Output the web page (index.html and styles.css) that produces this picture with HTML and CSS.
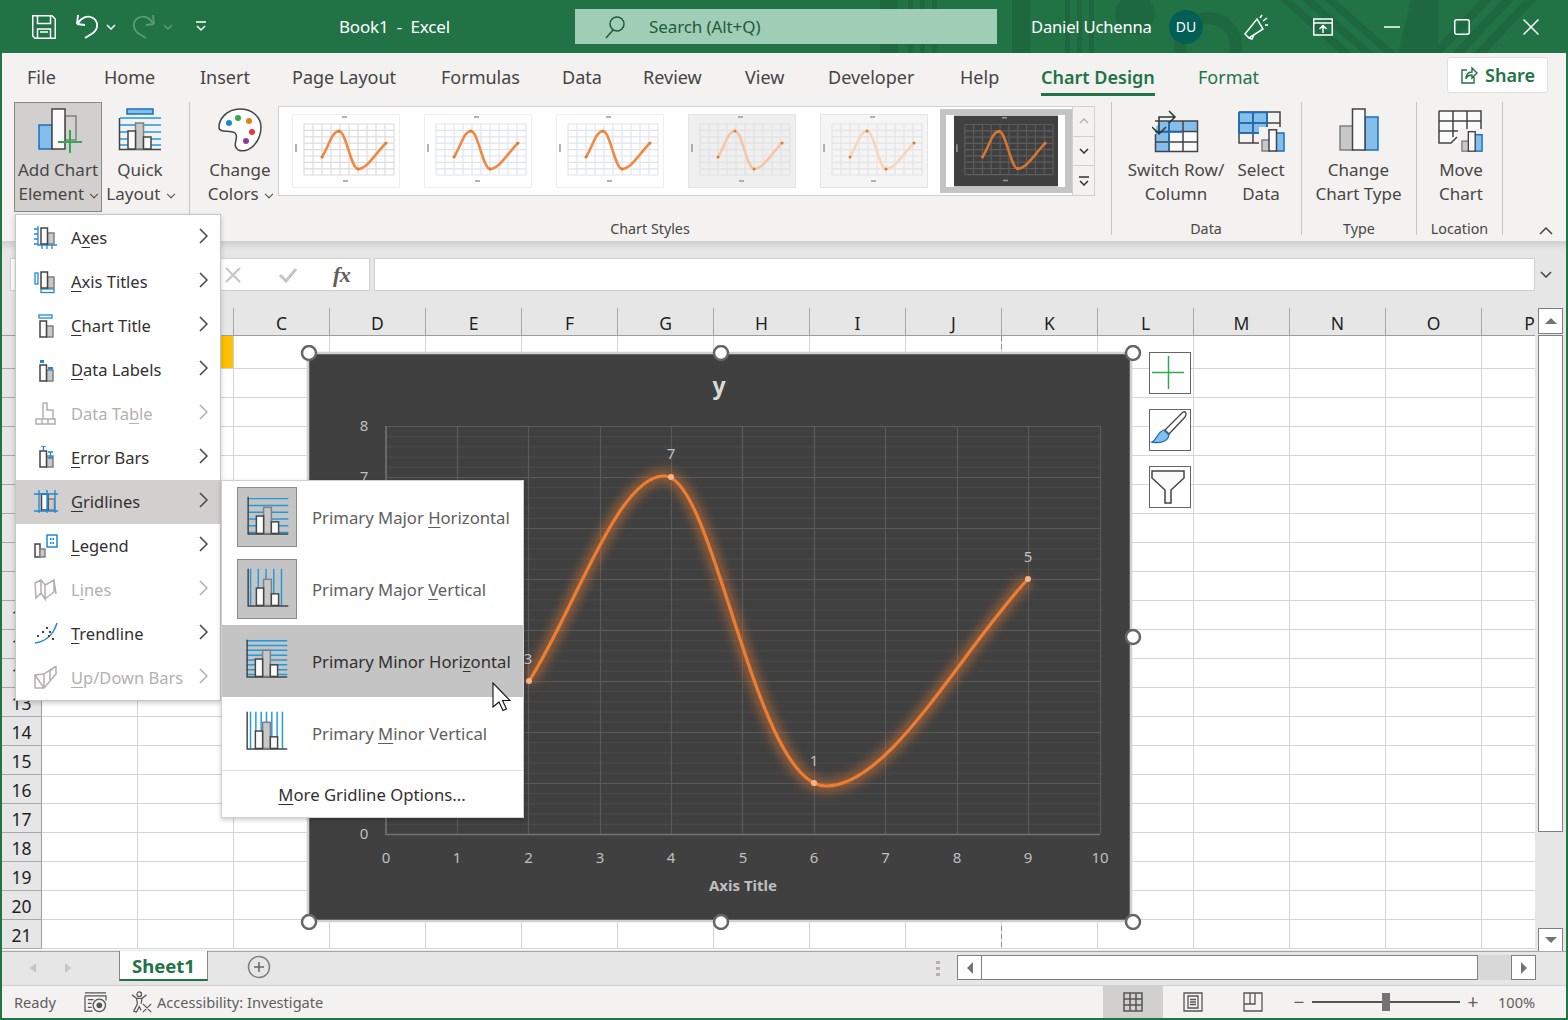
FILE: index.html
```html
<!DOCTYPE html>
<html lang="en">
<head>
<meta charset="utf-8">
<title>Book1 - Excel</title>
<link rel="stylesheet" href="styles.css">
</head>
<body>
<svg class="defs" width="0" height="0" aria-hidden="true">
  <defs>
    <symbol id="th" viewBox="0 0 106 72">
      <rect width="106" height="72" class="th-bg"/>
      <path class="th-grid" d="M11 9H101M11 15.4H101M11 21.8H101M11 28.2H101M11 34.6H101M11 41H101M11 47.4H101M11 53.8H101M11 60H101M11 9V60M20 9V60M29 9V60M38 9V60M47 9V60M56 9V60M65 9V60M74 9V60M83 9V60M92 9V60M101 9V60"/>
      <path class="th-line" d="M29 42C36 31 39 16 46 16C53 16 58 54 65 54C74 54 83 38 93 28"/>
      <path class="th-dot" d="M29 42v.1M46 16v.1M65 54v.1M93 28v.1"/>
      <path class="th-label" d="M3 29V37M49 2H54M50 66H55"/>
    </symbol>
    <symbol id="mb" viewBox="0 0 24 24">
      <rect x="12.5" y="7" width="6.5" height="11" fill="#c8c8c8" stroke="#808080" stroke-width="1.5"/>
      <rect x="6" y="2" width="6.5" height="16" fill="#fafafa" stroke="#444" stroke-width="1.5"/>
    </symbol>
    <symbol id="sb" viewBox="0 0 60 60">
      <path d="M10.500 9V47.500H52" fill="none" stroke="#444" stroke-width="1.500"/>
      <rect x="26.500" y="20" width="8" height="27" fill="#c8c8c8" stroke="#808080" stroke-width="1.500"/>
      <rect x="19" y="29" width="7.500" height="18" fill="#fafafa" stroke="#444" stroke-width="1.500"/>
      <rect x="34.500" y="35" width="7.500" height="12" fill="#fafafa" stroke="#444" stroke-width="1.500"/>
    </symbol>
    <symbol id="minibars" viewBox="0 0 24 24">
      <rect x="1" y="11" width="8" height="11" fill="#c8c8c8" stroke="#808080" stroke-width="1.500"/>
      <rect x="15" y="4" width="8" height="18" fill="#83beec" stroke="#1a6fbd" stroke-width="1.500"/>
      <rect x="8" y="0.750" width="7.500" height="21.250" fill="#fafafa" stroke="#444" stroke-width="1.500"/>
    </symbol>
  </defs>
</svg>

<div class="app">
  <header class="titlebar">
    <svg class="title-art" viewBox="0 0 1568 53" aria-hidden="true">
      <path d="M880 0h18v53h-18zM1012 0h18v53h-18zM908 0h5v53h-5zM920 0h5v53h-5zM932 0h5v53h-5zM1065 0h5v53h-5zM1077 0h5v53h-5zM1089 0h5v53h-5z"/>
      <circle cx="1135" cy="14" r="20"/>
      <circle cx="1208" cy="46" r="28" fill="none" stroke="#000" stroke-width="12"/>
      <path d="M1280 0h12l60 53h-12zM1302 0h12l60 53h-12zM1324 0h12l60 53h-12zM1411 0h27v53h-40zM1480 0h12l-50 53h-12zM1502 0h12l-50 53h-12zM1524 0h12l-50 53h-12z"/>
    </svg>
    <svg class="qa qa-save" viewBox="0 0 24 24"><path d="M.75.75H20L23.250 4V23.250H3L.75 21ZM5.500.75V8.500H18.500V.75M5.500 23V14H18.500V23M8 17H16" fill="none" stroke="#fff" stroke-width="1.500"/></svg>
    <svg class="qa qa-undo" viewBox="0 0 24 24"><path d="M1 10L9 11M1 10L2 1M2 9C6 3 12 1 17 4C23 8 22 15 17 19L9 24" transform="translate(0 -1)" fill="none" stroke="#fff" stroke-width="1.800"/></svg>
    <svg class="qa-chev" viewBox="0 0 10 6"><path d="M1 1L5 5L9 1" fill="none" stroke="#fff" stroke-width="1.500"/></svg>
    <svg class="qa qa-redo" viewBox="0 0 24 24"><path d="M23 10L15 11M23 10L22 1M22 9C18 3 12 1 7 4C1 8 2 15 7 19L15 24" transform="translate(0 -1)" fill="none" stroke="#5a9a78" stroke-width="1.800"/></svg>
    <svg class="qa-chev qa-chev2" viewBox="0 0 10 6"><path d="M1 1L5 5L9 1" fill="none" stroke="#5a9a78" stroke-width="1.500"/></svg>
    <svg class="qa-custom" viewBox="0 0 12 11"><path d="M1 1H11M2 5L6 9L10 5" fill="none" stroke="#fff" stroke-width="1.500"/></svg>
    <div class="doc-title">Book1&nbsp; - &nbsp;Excel</div>
    <div class="search">
      <svg class="search-icon" viewBox="0 0 22 24"><circle cx="13" cy="9" r="7" fill="none" stroke="#1d5c3a" stroke-width="1.500"/><path d="M9 15L2 23" stroke="#1d5c3a" stroke-width="1.500"/></svg>
      <span>Search (Alt+Q)</span>
    </div>
    <div class="user">Daniel Uchenna</div>
    <div class="avatar">DU</div>
    <svg class="win win-coauth" viewBox="0 0 26 26"><path d="M2 20L14 5L20 15L6 24ZM6 24L9 25L11 21M17 4L19 1M20 7L24 4M22 11L25 11" fill="none" stroke="#fff" stroke-width="1.500"/></svg>
    <svg class="win win-display" viewBox="0 0 20 18"><path d="M.750 1H19.250V17H.750ZM.750 5H19.250M10 15V8M6.500 11L10 7.500L13.500 11" fill="none" stroke="#fff" stroke-width="1.500"/></svg>
    <svg class="win win-min" viewBox="0 0 16 2"><path d="M0 1H16" stroke="#fff" stroke-width="1.500"/></svg>
    <svg class="win win-max" viewBox="0 0 16 16"><rect x=".75" y=".75" width="14.500" height="14.500" rx="2" fill="none" stroke="#fff" stroke-width="1.500"/></svg>
    <svg class="win win-close" viewBox="0 0 16 16"><path d="M.500 .500L15.500 15.500M15.500 .500L.500 15.500" stroke="#fff" stroke-width="1.500"/></svg>
  </header>

  <nav class="tabs">
    <span class="tab">File</span>
    <span class="tab">Home</span>
    <span class="tab">Insert</span>
    <span class="tab">Page Layout</span>
    <span class="tab">Formulas</span>
    <span class="tab">Data</span>
    <span class="tab">Review</span>
    <span class="tab">View</span>
    <span class="tab">Developer</span>
    <span class="tab">Help</span>
    <span class="tab tab-active">Chart Design</span>
    <span class="tab tab-green">Format</span>
    <button class="share">
      <svg viewBox="0 0 18 18" class="share-icon"><path d="M7 4H2V17H14V11M6 13C6 8 9 6 12 6V2L17 7L12 12V9C9 9 7 10 6 13Z" fill="none" stroke="#217346" stroke-width="1.400"/></svg>
      Share
    </button>
  </nav>

  <section class="ribbon">
    <div class="group g-first">
      <div class="btns">
        <div class="big big-add is-open">
          <svg class="big-icon icon-add" viewBox="0 0 46 46" width="46" height="46"><rect x="1" y="18" width="13" height="24" fill="#83beec" stroke="#1a6fbd" stroke-width="1.500"/><path d="M27 9H38V33H27Z" fill="#d2d0ce" stroke="#808080" stroke-width="1.500"/><rect x="14" y="2" width="13" height="40" fill="#fafafa" stroke="#444" stroke-width="1.500"/><path d="M20 35H44M32 23V46" stroke="#33a852" stroke-width="2"/></svg>
          <span>Add Chart</span>
          <span>Element <i class="caret"></i></span>
        </div>
        <div class="big big-quick">
          <svg class="big-icon" viewBox="0 0 44 46" width="44" height="46"><path d="M2 11H43M2 18H43M2 25H43M2 32H43M2 38H43" stroke="#1e9ae0" stroke-width="1.500"/><rect x="9" y="2" width="26" height="5" fill="#83beec" stroke="#1a6fbd" stroke-width="1.500"/><path d="M1.500 11V42.500H43" fill="none" stroke="#444" stroke-width="1.500"/><rect x="17.500" y="16" width="8" height="26" fill="#c8c8c8" stroke="#808080" stroke-width="1.500"/><rect x="10" y="24" width="7.500" height="18" fill="#fafafa" stroke="#444" stroke-width="1.500"/><rect x="25.500" y="30" width="7.500" height="12" fill="#fafafa" stroke="#444" stroke-width="1.500"/></svg>
          <span>Quick</span>
          <span>Layout <i class="caret"></i></span>
        </div>
      </div>
    </div>
    <div class="group g-colors">
      <div class="big big-colors">
        <svg class="big-icon" viewBox="0 0 46 46" width="46" height="46"><path d="M23 2C9 2 2 13 2 20C2 27 13 22 18 26C23 30 14 38 21 43C33 47 44 34 44 20C44 10 35 2 23 2Z" fill="#fff" stroke="#444" stroke-width="1.500"/><circle cx="12" cy="16" r="3" fill="#1e88d8"/><circle cx="21" cy="11" r="3" fill="#33a852"/><circle cx="32" cy="14" r="3" fill="#ee7b10"/><circle cx="35" cy="25" r="3" fill="#e8383b"/><circle cx="29" cy="34" r="3" fill="#8e3aa8"/></svg>
        <span>Change</span>
        <span>Colors <i class="caret"></i></span>
      </div>
    </div>
    <div class="group g-styles">
      <div class="gallery-row">
        <div class="gallery">
          <svg class="thumb t1"><use href="#th"/></svg>
          <svg class="thumb t2"><use href="#th"/></svg>
          <svg class="thumb t3"><use href="#th"/></svg>
          <svg class="thumb t4"><use href="#th"/></svg>
          <svg class="thumb t5"><use href="#th"/></svg>
          <div class="thumb-sel"><div class="thumb-inner"><svg class="thumb thumb-dark t6"><use href="#th"/></svg></div></div>
        </div>
        <div class="gal-scroll">
          <div class="gal-btn"><svg viewBox="0 0 10 6"><path d="M1 5L5 1L9 5" fill="none" stroke="#b3b0ad" stroke-width="1.300"/></svg></div>
          <div class="gal-btn"><svg viewBox="0 0 10 6"><path d="M1 1L5 5L9 1" fill="none" stroke="#333" stroke-width="1.500"/></svg></div>
          <div class="gal-btn"><svg class="gal-more" viewBox="0 0 10 10"><path d="M0 1H10M1 5L5 9L9 5" fill="none" stroke="#333" stroke-width="1.500"/></svg></div>
        </div>
      </div>
      <div class="group-label label-styles">Chart Styles</div>
    </div>
    <div class="group g-data">
      <div class="btns">
        <div class="big big-switch">
          <svg class="big-icon" viewBox="0 0 48 46" width="48" height="46"><path d="M4 14H45V44H4Z" fill="#fafafa"/><path d="M4 14H45V24H17V44H4Z" fill="#83beec"/><path d="M4 12H10L4 20Z" fill="#f3f2f1"/><path d="M3 14H45.500V44.500H3.500V27M17 14V44M31 14V44M3 24.500H45M3 35H45" fill="none" stroke="#444" stroke-width="1.500"/><path d="M17 25H31M17 14V25M3.500 25H17M17 25V44" fill="none" stroke="#1a6fbd" stroke-width="1.500"/><path d="M7 27L7 10H22M17 4L23 10L17 16M0 20L7 27L14 20" fill="none" stroke="#333" stroke-width="1.500"/></svg>
          <span>Switch Row/</span>
          <span>Column</span>
        </div>
        <div class="big big-select">
          <svg class="big-icon" viewBox="0 0 50 46" width="50" height="46"><rect x="3" y="5" width="28" height="21" fill="#83beec"/><path d="M3 5H44V36M44 36H3V5M17 5V36M31 5V36M3 16H44M3 26H44" fill="none" stroke="#444" stroke-width="1.500"/><path d="M3 5.500H31V26H3ZM17 5V26M3 16H31" fill="none" stroke="#1a6fbd" stroke-width="1.500"/><rect x="23" y="20" width="27" height="26" fill="#f3f2f1"/><svg x="24" y="22" width="26" height="24"><use href="#minibars"/></svg></svg>
          <span>Select</span>
          <span>Data</span>
        </div>
      </div>
      <div class="group-label">Data</div>
    </div>
    <div class="group g-type">
      <div class="big big-type">
        <svg class="big-icon" viewBox="0 0 40 46" width="40" height="46"><rect x="1" y="19" width="13" height="24" fill="#c8c8c8" stroke="#808080" stroke-width="1.500"/><rect x="26" y="10" width="13" height="33" fill="#83beec" stroke="#1a6fbd" stroke-width="1.500"/><rect x="13.500" y="2" width="12.500" height="41" fill="#fafafa" stroke="#444" stroke-width="1.500"/></svg>
        <span>Change</span>
        <span>Chart Type</span>
      </div>
      <div class="group-label">Type</div>
    </div>
    <div class="group g-location">
      <div class="big big-move">
        <svg class="big-icon" viewBox="0 0 48 46" width="48" height="46"><path d="M2 4H44V36H2Z" fill="#fafafa"/><path d="M2 4H44V34M2 4V36H14L20 30M2 14H44M2 24H44M16 4V30M30 4V30" fill="none" stroke="#444" stroke-width="1.500"/><rect x="21" y="22" width="27" height="24" fill="#f3f2f1"/><svg x="23" y="24" width="24" height="22"><use href="#minibars"/></svg></svg>
        <span>Move</span>
        <span>Chart</span>
      </div>
      <div class="group-label">Location</div>
    </div>
    <svg class="collapse" viewBox="0 0 14 8"><path d="M1 7L7 1L13 7" fill="none" stroke="#444" stroke-width="1.500"/></svg>
  </section>

  <section class="formula">
    <div class="name-box"></div>
    <div class="fx-box">
      <svg class="fx-x" viewBox="0 0 18 18"><path d="M2 2L16 16M16 2L2 16" stroke="#c8c6c4" stroke-width="2.200"/></svg>
      <svg class="fx-v" viewBox="0 0 20 18"><path d="M2 9L8 15L18 3" fill="none" stroke="#c8c6c4" stroke-width="3"/></svg>
      <span class="fx-f">fx</span>
    </div>
    <div class="fx-input"></div>
    <svg class="fx-chev" viewBox="0 0 12 7"><path d="M1 1L6 6L11 1" fill="none" stroke="#444" stroke-width="1.500"/></svg>
  </section>

  <section class="sheet">
    <div class="sheet-main">
      <div class="col-heads">
        <div class="corner"></div>
        <div class="col"></div><div class="col">B</div><div class="col">C</div><div class="col">D</div><div class="col">E</div><div class="col">F</div><div class="col">G</div><div class="col">H</div><div class="col">I</div><div class="col">J</div><div class="col">K</div><div class="col">L</div><div class="col">M</div><div class="col">N</div><div class="col">O</div><div class="col">P</div>
      </div>
      <div class="rows">
        <div class="row row-first"><div class="rh">1</div><div class="cells"><div class="cell-gold"></div></div></div>
        <div class="row"><div class="rh">2</div><div class="cells"></div></div>
        <div class="row"><div class="rh">3</div><div class="cells"></div></div>
        <div class="row"><div class="rh">4</div><div class="cells"></div></div>
        <div class="row"><div class="rh">5</div><div class="cells"></div></div>
        <div class="row"><div class="rh">6</div><div class="cells"></div></div>
        <div class="row"><div class="rh">7</div><div class="cells"></div></div>
        <div class="row"><div class="rh">8</div><div class="cells"></div></div>
        <div class="row"><div class="rh">9</div><div class="cells"></div></div>
        <div class="row"><div class="rh">10</div><div class="cells"></div></div>
        <div class="row"><div class="rh">11</div><div class="cells"></div></div>
        <div class="row"><div class="rh">12</div><div class="cells"></div></div>
        <div class="row"><div class="rh">13</div><div class="cells"></div></div>
        <div class="row"><div class="rh">14</div><div class="cells"></div></div>
        <div class="row"><div class="rh">15</div><div class="cells"></div></div>
        <div class="row"><div class="rh">16</div><div class="cells"></div></div>
        <div class="row"><div class="rh">17</div><div class="cells"></div></div>
        <div class="row"><div class="rh">18</div><div class="cells"></div></div>
        <div class="row"><div class="rh">19</div><div class="cells"></div></div>
        <div class="row"><div class="rh">20</div><div class="cells"></div></div>
        <div class="row"><div class="rh">21</div><div class="cells"></div></div>
      </div>
    </div>
    <div class="vscroll">
      <div class="sb-btn"><i class="tri tri-up"></i></div>
      <div class="sb-thumb"></div>
      <div class="sb-track"></div>
      <div class="sb-btn sb-btn-down"><i class="tri tri-down"></i></div>
    </div>
  </section>

  <section class="sheetbar">
    <i class="nav-tri nav-l"></i>
    <i class="nav-tri nav-r"></i>
    <div class="sheet-tab">Sheet1</div>
    <svg class="add-sheet" viewBox="0 0 24 24"><circle cx="12" cy="12" r="10.500" fill="none" stroke="#808080" stroke-width="1.500"/><path d="M7 12H17M12 7V17" stroke="#666" stroke-width="1.500"/></svg>
    <div class="dots"><i></i><i></i><i></i></div>
    <div class="hscroll">
      <div class="hbtn"><i class="tri tri-left"></i></div>
      <div class="hthumb"></div>
      <div class="htrack"></div>
      <div class="hbtn"><i class="tri tri-right"></i></div>
    </div>
  </section>

  <footer class="status">
    <span class="st-ready">Ready</span>
    <svg class="st-macro" viewBox="0 0 24 22"><path d="M1 1H23M1 4H23V9M1 4V20H9M4 8H10M4 12H8M4 16H8" fill="none" stroke="#555" stroke-width="1.300"/><circle cx="16" cy="14" r="6.500" fill="none" stroke="#555" stroke-width="1.300"/><circle cx="16" cy="14" r="3" fill="#555"/></svg>
    <svg class="st-acc" viewBox="0 0 24 24"><circle cx="9" cy="3.500" r="2.500" fill="none" stroke="#555" stroke-width="1.300"/><path d="M1 4L6 8H12L17 4M6 8L7 14L3 22L6 23L9 17L11 21M12 8L11 14M13 14L22 23M22 14L13 23" fill="none" stroke="#555" stroke-width="1.300"/></svg>
    <span class="st-acc-text">Accessibility: Investigate</span>
    <div class="views">
      <div class="view view-on"><svg viewBox="0 0 20 20"><path d="M1 1H19V19H1ZM1 7H19M1 13H19M7 1V19M13 1V19" fill="none" stroke="#555" stroke-width="1.500"/></svg></div>
      <div class="view"><svg viewBox="0 0 20 20"><path d="M1 1H19V19H1ZM5 4H15V16H5ZM7 7.500H13M7 10H13M7 12.500H13" fill="none" stroke="#555" stroke-width="1.300"/></svg></div>
      <div class="view"><svg viewBox="0 0 20 20"><path d="M1 1H19V19H1ZM1 12H12V1M7 1V12" fill="none" stroke="#555" stroke-width="1.300"/></svg></div>
    </div>
    <div class="zoom-ctl">
      <span class="z-sym">−</span>
      <div class="z-track"><i class="z-knob"></i></div>
      <span class="z-sym">+</span>
      <span class="z-val">100%</span>
    </div>
  </footer>
</div>

<svg class="chart" viewBox="300 345 845 585" aria-label="Line chart">
  <defs>
    <pattern id="minor" patternUnits="userSpaceOnUse" x="386" y="426" width="200" height="10.200"><path d="M0 .5H200" stroke="#4b4b4b" stroke-width="1"/></pattern>
    <filter id="glow" x="-20%" y="-20%" width="140%" height="140%"><feGaussianBlur stdDeviation="5"/></filter>
  </defs>
  <rect x="308" y="353" width="823" height="568" fill="#404040" stroke="#d0d0d0" stroke-width="2.500"/>
  <rect x="386" y="426" width="714" height="408" fill="url(#minor)"/>
  <path d="M386 426.500H1100M386 477.500H1100M386 528.500H1100M386 579.500H1100M386 630.500H1100M386 681.500H1100M386 732.500H1100M386 783.500H1100M457.500 426V834M528.500 426V834M600.500 426V834M671.500 426V834M742.500 426V834M814.500 426V834M885.500 426V834M957.500 426V834M1028.500 426V834M1100.500 426V834" stroke="#5a5a5a" stroke-width="1.200" fill="none"/>
  <path d="M386 426V834.500H1100" stroke="#757575" stroke-width="1.500" fill="none"/>
  <path class="curve-glow" d="M529 681C575 610 618 474 665 476C715 478 755 786 826 786C890 786 960 652 1028 579"/>
  <path class="curve" d="M529 681C575 610 618 474 665 476C715 478 755 786 826 786C890 786 960 652 1028 579"/>
  <g class="pts"><circle cx="529" cy="681" r="3"/><circle cx="671" cy="477" r="3"/><circle cx="814" cy="783" r="3"/><circle cx="1028" cy="579" r="3"/></g>
  <text class="c-title" x="719" y="394">y</text>
  <g class="c-val">
    <text x="528" y="664">3</text><text x="671" y="459">7</text><text x="814" y="766">1</text><text x="1028" y="562">5</text>
  </g>
  <g class="c-y"><text x="364" y="431">8</text><text x="364" y="482">7</text><text x="364" y="839">0</text></g>
  <g class="c-x"><text x="386" y="863">0</text><text x="457" y="863">1</text><text x="528.500" y="863">2</text><text x="600" y="863">3</text><text x="671" y="863">4</text><text x="743" y="863">5</text><text x="814" y="863">6</text><text x="885.500" y="863">7</text><text x="957" y="863">8</text><text x="1028" y="863">9</text><text x="1100" y="863">10</text></g>
  <text class="c-axis" x="743" y="891">Axis Title</text>
  <g class="handles"><circle cx="309" cy="353" r="7"/><circle cx="721" cy="353" r="7"/><circle cx="1133" cy="353" r="7"/><circle cx="1133" cy="637" r="7"/><circle cx="309" cy="922" r="7"/><circle cx="721" cy="922" r="7"/><circle cx="1133" cy="922" r="7"/></g>
</svg>

<div class="page-break pb-top"></div>
<div class="page-break pb-bottom"></div>

<div class="floaters">
  <div class="fl"><svg viewBox="0 0 40 40"><path d="M2 19.500H34M18.500 3V36" stroke="#33a852" stroke-width="1.500"/></svg></div>
  <div class="fl"><svg viewBox="0 0 40 40"><path d="M33 2C36 1 37 4 35 7L19 24L15 20Z" fill="#fff" stroke="#444" stroke-width="1.300"/><path d="M14 20L19 25C18 31 11 34 2 32C7 30 7 22 14 20Z" fill="#83beec" stroke="#1a6fbd" stroke-width="1.300"/></svg></div>
  <div class="fl"><svg viewBox="0 0 40 40"><path d="M2 4H34V11L21 23V36H15V23L2 11Z" fill="#fafafa" stroke="#444" stroke-width="1.500"/></svg></div>
</div>

<div class="menu">
  <div class="mi"><svg class="mi-ic" viewBox="0 0 24 24"><path d="M4 0V19H23M0 3H4M0 8H4M0 13H4M0 18H4M8 19V23M13 19V23M18 19V23" fill="none" stroke="#1e88d8" stroke-width="1.300"/><use href="#mb" x="1"/></svg><span class="mi-t">A<u>x</u>es</span><svg class="chev" viewBox="0 0 9 16"><path d="M1 1L8 8L1 15" fill="none" stroke="#444" stroke-width="1.500"/></svg></div>
  <div class="mi"><svg class="mi-ic" viewBox="0 0 24 24"><rect x="1" y="3" width="3" height="11" fill="#fff" stroke="#1e88d8" stroke-width="1.300"/><rect x="7" y="19" width="13" height="3.500" fill="#fff" stroke="#1e88d8" stroke-width="1.300"/><use href="#mb" x="1"/></svg><span class="mi-t"><u>A</u>xis Titles</span><svg class="chev" viewBox="0 0 9 16"><path d="M1 1L8 8L1 15" fill="none" stroke="#444" stroke-width="1.500"/></svg></div>
  <div class="mi"><svg class="mi-ic" viewBox="0 0 24 24"><rect x="5" y="1" width="13" height="3" fill="#fff" stroke="#1e88d8" stroke-width="1.300"/><use href="#mb" y="5"/></svg><span class="mi-t"><u>C</u>hart Title</span><svg class="chev" viewBox="0 0 9 16"><path d="M1 1L8 8L1 15" fill="none" stroke="#444" stroke-width="1.500"/></svg></div>
  <div class="mi"><svg class="mi-ic" viewBox="0 0 24 24"><use href="#mb" y="5"/><rect x="6" y="2" width="4" height="3" fill="#1e88d8"/><rect x="14" y="9" width="5" height="2.500" fill="#1e88d8"/></svg><span class="mi-t"><u>D</u>ata Labels</span><svg class="chev" viewBox="0 0 9 16"><path d="M1 1L8 8L1 15" fill="none" stroke="#444" stroke-width="1.500"/></svg></div>
  <div class="mi mi-dis"><svg class="mi-ic" viewBox="0 0 24 24"><path d="M9 1H13V8H19V17M9 1V17M2 17H21V22H2ZM8 17V22M14 17V22" fill="none" stroke="#b3b0ad" stroke-width="1.500"/></svg><span class="mi-t">Data Ta<u>b</u>le</span><svg class="chev" viewBox="0 0 9 16"><path d="M1 1L8 8L1 15" fill="none" stroke="#b3b0ad" stroke-width="1.500"/></svg></div>
  <div class="mi"><svg class="mi-ic" viewBox="0 0 24 24"><use href="#mb" y="3"/><path d="M7 0H12M9.500 0V5M14 6H19M16.500 6V12M14 12H19" fill="none" stroke="#1e88d8" stroke-width="1.300"/></svg><span class="mi-t"><u>E</u>rror Bars</span><svg class="chev" viewBox="0 0 9 16"><path d="M1 1L8 8L1 15" fill="none" stroke="#444" stroke-width="1.500"/></svg></div>
  <div class="mi mi-on"><svg class="mi-ic" viewBox="0 0 24 24"><use href="#mb" x="1.500" y="2"/><path d="M0 4H24M0 21H24M5 0V23M13 0V23M21 0V23" fill="none" stroke="#1e88d8" stroke-width="1.300"/></svg><span class="mi-t"><u>G</u>ridlines</span><svg class="chev" viewBox="0 0 9 16"><path d="M1 1L8 8L1 15" fill="none" stroke="#444" stroke-width="1.500"/></svg></div>
  <div class="mi"><svg class="mi-ic" viewBox="0 0 24 24"><rect x="1" y="10" width="5" height="13" fill="#fafafa" stroke="#444" stroke-width="1.500"/><rect x="6" y="15" width="5" height="8" fill="#c8c8c8" stroke="#808080" stroke-width="1.500"/><rect x="13" y="1" width="10" height="12" fill="#fff" stroke="#1e88d8" stroke-width="1.500"/><path d="M16 5H20M16 9H20" stroke="#1e88d8" stroke-width="2" stroke-dasharray="1.500 1"/></svg><span class="mi-t"><u>L</u>egend</span><svg class="chev" viewBox="0 0 9 16"><path d="M1 1L8 8L1 15" fill="none" stroke="#444" stroke-width="1.500"/></svg></div>
  <div class="mi mi-dis"><svg class="mi-ic" viewBox="0 0 24 24"><path d="M1 5L7 2L11 7V21L7 15L2 20ZM11 7L20 2V14L11 21M7 2V15M20 2L22 16" fill="none" stroke="#b3b0ad" stroke-width="1.500"/></svg><span class="mi-t">L<u>i</u>nes</span><svg class="chev" viewBox="0 0 9 16"><path d="M1 1L8 8L1 15" fill="none" stroke="#b3b0ad" stroke-width="1.500"/></svg></div>
  <div class="mi"><svg class="mi-ic" viewBox="0 0 24 24"><path d="M1 21C10 20 19 14 23 1" fill="none" stroke="#1e88d8" stroke-width="1.500"/><path d="M4 13v2M9 9v2M13 5v2M15 13v2M19 16v2M16 9v2" stroke="#444" stroke-width="2"/></svg><span class="mi-t"><u>T</u>rendline</span><svg class="chev" viewBox="0 0 9 16"><path d="M1 1L8 8L1 15" fill="none" stroke="#444" stroke-width="1.500"/></svg></div>
  <div class="mi mi-dis"><svg class="mi-ic" viewBox="0 0 24 24"><path d="M1 9V22H10L22 8V0L10 8ZM1 9L10 22M22 0L16 5V14M10 8V22" fill="none" stroke="#b3b0ad" stroke-width="1.500"/></svg><span class="mi-t"><u>U</u>p/Down Bars</span><svg class="chev" viewBox="0 0 9 16"><path d="M1 1L8 8L1 15" fill="none" stroke="#b3b0ad" stroke-width="1.500"/></svg></div>
</div>

<div class="submenu">
  <div class="si"><div class="si-box si-boxed"><svg viewBox="0 0 60 60"><path d="M10 11H52M10 18H52M10 25H52M10 32H52M10 39H52M10 46H52" stroke="#1e9ae0" stroke-width="1.500"/><use href="#sb"/></svg></div><span>Primary Major <u>H</u>orizontal</span></div>
  <div class="si"><div class="si-box si-boxed"><svg viewBox="0 0 60 60"><path d="M13 9V47M21 9V47M29 9V47M37 9V47M45 9V47" stroke="#1e9ae0" stroke-width="1.500"/><use href="#sb"/></svg></div><span>Primary Major <u>V</u>ertical</span></div>
  <div class="si si-on"><div class="si-box"><svg viewBox="0 0 60 60"><path d="M10 10H52M10 15H52M10 20H52M10 25H52M10 30H52M10 35H52M10 40H52M10 45H52" stroke="#1e9ae0" stroke-width="1.500"/><use href="#sb"/></svg></div><span>Primary Minor Hori<u>z</u>ontal</span></div>
  <div class="si"><div class="si-box"><svg viewBox="0 0 60 60"><path d="M14 9V47M19.500 9V47M25 9V47M30.500 9V47M36 9V47M41.500 9V47M47 9V47" stroke="#1e9ae0" stroke-width="1.500"/><use href="#sb"/></svg></div><span>Primary <u>M</u>inor Vertical</span></div>
  <div class="si-sep"></div>
  <div class="si-more"><u>M</u>ore Gridline Options...</div>
</div>

<svg class="cursor" viewBox="0 0 20 30"><path d="M1 1V25L7 20L11 28.500L14.500 27L10.500 18.500H18Z" fill="#fff" stroke="#111" stroke-width="1.100"/></svg>
</body>
</html>
```

FILE: styles.css
```css
* { box-sizing: border-box; }
html, body { margin: 0; height: 1020px; overflow: hidden; }
body { position: relative; background: #fff; font-family: "Noto Sans", "Open Sans", sans-serif; color: #323130; }
.defs { position: absolute; }
.app { height: 1020px; display: flex; flex-direction: column; border: 2px solid #217346; border-top: 0; }
svg { display: block; }
u { text-decoration-thickness: 1px; text-underline-offset: 3px; }

/* title bar */
.titlebar { position: relative; height: 53px; flex: none; margin: 0 -2px; background: #217346; display: flex; align-items: center; color: #fff; }
.title-art { position: absolute; left: 0; top: 0; width: 1568px; height: 53px; fill: #000; opacity: .09; }
.titlebar > *:not(.title-art) { position: relative; }
.qa { width: 24px; height: 24px; }
.qa-save { margin-left: 32px; }
.qa-undo { margin-left: 20px; }
.qa-chev { width: 10px; height: 6px; margin-left: 6px; }
.qa-redo { margin-left: 15px; }
.qa-chev2 { margin-left: 8px; }
.qa-custom { width: 12px; height: 11px; margin-left: 22px; }
.doc-title { margin-left: 132px; width: 236px; font-size: 17px; letter-spacing: -.2px; white-space: nowrap; }
.search { width: 422px; height: 35px; background: #a0cdb5; color: #1d5c3a; display: flex; align-items: center; font-size: 17px; letter-spacing: -.1px; }
.search-icon { width: 22px; height: 24px; margin: 0 23px 0 29px; }
.user { margin-left: 34px; width: 138px; font-size: 16.600px; letter-spacing: -.2px; white-space: nowrap; }
.avatar { width: 34px; height: 34px; border-radius: 50%; background: #035e56; font-size: 14px; display: flex; align-items: center; justify-content: center; }
.win { flex: none; }
.win-coauth { width: 26px; height: 26px; margin-left: 40px; }
.win-display { width: 20px; height: 18px; margin-left: 44px; }
.win-min { width: 16px; height: 2px; margin-left: 51px; }
.win-max { width: 16px; height: 16px; margin-left: 54px; }
.win-close { width: 16px; height: 16px; margin-left: 53px; }

/* tabs */
.tabs { position: relative; height: 47px; flex: none; background: #f3f2f1; padding-left: 25px; display: grid; grid-template-columns: 77px 96px 92px 149px 121px 81px 102px 83px 132px 81px 157px 1fr; align-items: center; font-size: 18px; color: #444; }
.tab { white-space: nowrap; justify-self: start; line-height: 24px; }
.tab-active { color: #217346; font-weight: 600; position: relative; }
.tab-active::after { content: ""; position: absolute; left: 0; right: 0; bottom: -7px; height: 3px; background: #217346; }
.tab-green { color: #217346; }
.share { position: absolute; left: 1445px; top: 4px; width: 101px; height: 36px; background: #fff; border: 1px solid #e1dfdd; border-radius: 3px; display: flex; align-items: center; justify-content: center; gap: 7px; font: 600 18px "Noto Sans", sans-serif; color: #217346; padding: 0; }
.share-icon { width: 18px; height: 18px; }

/* ribbon */
.ribbon { position: relative; height: 141px; flex: none; background: #f3f2f1; display: flex; padding: 2px 0 0 12px; font-size: 17px; color: #484644; }
.group { height: 133px; display: flex; flex-direction: column; flex: none; position: relative; }
.btns { display: flex; }
.g-first { width: 176px; border-right: 1px solid #c8c6c4; }
.g-colors { width: 89px; }
.g-styles { width: 833px; border-right: 1px solid #c8c6c4; }
.g-data { width: 190px; border-right: 1px solid #c8c6c4; }
.g-type { width: 115px; border-right: 1px solid #c8c6c4; align-items: center; }
.g-location { width: 86px; border-right: 1px solid #c8c6c4; }
.big { height: 110px; display: flex; flex-direction: column; align-items: center; line-height: 24px; padding-top: 5px; white-space: nowrap; }
.big-icon { height: 46px; margin-bottom: 5px; flex: none; }
.icon-add { transform: translateX(3px); }
.is-open { background: #d2d0ce; border: 1px solid #8a8886; padding-top: 4px; }
.big-add { width: 88px; }
.big-quick { width: 76px; margin-left: 0; }
.big-colors { width: 84px; margin-left: 8px; }
.big-switch { width: 98px; margin-left: 15px; }
.big-select { width: 50px; margin-left: 11px; }
.big-type { width: 90px; margin-left: -1px; }
.big-move { width: 46px; margin-left: 21px; }
.caret { display: inline-block; width: 6px; height: 6px; border: solid #484644; border-width: 0 1.500px 1.500px 0; transform: rotate(45deg) translate(-2px, -2px); margin-left: 3px; }
.group-label { position: absolute; left: 0; right: 0; bottom: -4px; text-align: center; font-size: 14.300px; line-height: 20px; color: #484644; }
.label-styles { right: 90px; }
.g-data .group-label { left: -1px; }
.collapse { position: absolute; left: 1537px; top: 127px; width: 14px; height: 8px; }

.gallery-row { display: flex; margin: 4px 0 0 -1px; height: 90px; }
.gallery { width: 795px; height: 90px; background: #fff; border: 1px solid #d2d0ce; display: flex; align-items: center; gap: 26px; padding: 0 0 0 14px; }
.thumb { width: 106px; height: 72px; flex: none; filter: blur(.45px); }
.thumb-sel { width: 132px; height: 84px; background: #c4c4c4; margin-left: -13px; padding: 6px 7px 6px 6px; flex: none; }
.thumb-inner { height: 72px; background: #fff; width: 119px; padding-left: 8px; }
.thumb-dark { width: 104px; }
.th-bg { fill: var(--bg); }
.th-grid { stroke: var(--grid); stroke-width: 1.200; fill: none; }
.th-line { stroke: var(--line); stroke-width: 2.600; fill: none; opacity: var(--lo); }
.th-dot { stroke: #e8772e; stroke-width: 3; stroke-linecap: round; fill: none; }
.th-label { stroke: #9a9a9a; stroke-width: 1.500; fill: none; }
.t1 { --bg: #fff; --grid: #dcdcdc; --line: #ef8a45; --lo: 1; outline: 1px solid #eee; }
.t2 { --bg: #fff; --grid: #dfe4ee; --line: #ef8a45; --lo: 1; outline: 1px solid #eee; }
.t3 { --bg: #fff; --grid: #e0e4ec; --line: #ef8a45; --lo: 1; outline: 1px solid #eee; }
.t4 { --bg: #efefef; --grid: #e2e2e2; --line: #f4c7a8; --lo: 1; outline: 1px solid #e4e4e4; }
.t5 { --bg: #f5f5f5; --grid: #e4e4e4; --line: #f8d5bd; --lo: 1; outline: 1px solid #e4e4e4; }
.t6 { --bg: #404040; --grid: #5c5c5c; --line: #d9752f; --lo: 1; }
.gal-scroll { width: 23px; display: flex; flex-direction: column; height: 90px; margin-left: -1px; background: #f3f2f1; }
.gal-btn { flex: 1; border: 1px solid #d2d0ce; margin-top: -1px; display: flex; align-items: center; justify-content: center; }
.gal-btn:first-child { margin-top: 0; }
.gal-btn svg { width: 10px; height: 6px; }
.gal-btn .gal-more { height: 10px; }

/* formula bar */
.formula { height: 67px; flex: none; background: linear-gradient(#cfcfcf 0, #e6e6e6 9px); padding: 17px 0 0 8px; display: flex; align-items: flex-start; position: relative; }
.name-box { width: 204px; height: 33px; background: #fff; border: 1px solid #d2d0ce; }
.fx-box { width: 156px; height: 33px; background: #fff; border: 1px solid #d2d0ce; border-left: 0; display: flex; align-items: center; position: relative; }
.fx-x { width: 18px; height: 18px; margin-left: 10px; }
.fx-v { width: 20px; height: 18px; margin-left: 36px; }
.fx-f { font: italic 700 22px "Liberation Serif", serif; color: #605e5c; margin-left: 35px; letter-spacing: -.5px; }
.fx-input { width: 1161px; height: 33px; margin-left: 4px; background: #fff; border: 1px solid #d2d0ce; }
.fx-chev { width: 12px; height: 7px; margin: 13px 0 0 5px; }

/* sheet */
.sheet { height: 643px; flex: none; display: flex; overflow: hidden; background: #e6e6e6; }
.sheet-main { width: 1533px; flex: none; overflow: hidden; }
.col-heads { display: flex; height: 28px; background: #e6e6e6; border-bottom: 1px solid #9e9e9e; overflow: hidden; }
.corner { width: 40px; flex: none; border-right: 1px solid #9e9e9e; }
.col { width: 96px; flex: none; border-right: 1px solid #a8a8a8; text-align: center; font-size: 17.500px; line-height: 28px; color: #1f1f1f; padding-top: 1px; }
.rows { background: #fff; height: 614px; overflow: hidden; }
.row { display: flex; height: 29px; }
.row-first { height: 33px; }
.rh { width: 40px; flex: none; background: #e6e6e6; border-right: 1px solid #9e9e9e; border-bottom: 1px solid #a8a8a8; text-align: center; font-size: 17.500px; line-height: 30px; color: #1f1f1f; }
.row-first .rh { line-height: 32px; }
.cells { flex: 1; border-bottom: 1px solid #d4d4d4; background: linear-gradient(to right, transparent 95px, #d4d4d4 95px) 0 0 / 96px 100%; }
.cell-gold { width: 95px; height: 32px; background: #ffc000; margin-left: 96px; }

.vscroll { width: 31px; flex: none; display: flex; flex-direction: column; padding: 0 3px; background: #e6e6e6; }
.sb-btn { height: 26px; flex: none; background: #fff; border: 1px solid #808080; display: flex; align-items: center; justify-content: center; }
.sb-btn-down { height: 24px; margin-bottom: -1px; }
.sb-thumb { height: 497px; flex: none; background: #fff; border: 1px solid #808080; margin-top: 1px; }
.sb-track { flex: 1; background: #e6e6e6; }
.tri { width: 0; height: 0; display: block; border: 5px solid transparent; }
.tri-up { border-top: 0; border-left-width: 6px; border-right-width: 6px; border-bottom: 6px solid #737373; }
.tri-down { border-bottom: 0; border-left-width: 6px; border-right-width: 6px; border-top: 6px solid #737373; }
.tri-left { border-left: 0; border-top-width: 6px; border-bottom-width: 6px; border-right: 6px solid #737373; }
.tri-right { border-right: 0; border-top-width: 6px; border-bottom-width: 6px; border-left: 6px solid #737373; }

/* sheet tabs */
.sheetbar { height: 34px; flex: none; background: #e6e6e6; border-top: 1px solid #a8a8a8; display: flex; align-items: flex-start; position: relative; }
.nav-tri { width: 0; height: 0; border: 5px solid transparent; margin-top: 11px; }
.nav-l { border-left: 0; border-right: 6px solid #c8c6c4; margin-left: 28px; }
.nav-r { border-right: 0; border-left: 6px solid #c8c6c4; margin-left: 29px; }
.sheet-tab { width: 89px; height: 30px; margin: -1px 0 0 48px; background: #fff; border: solid #8a8886; border-width: 0 1px; border-bottom: 2px solid #217346; color: #217346; font-weight: 700; font-size: 18.500px; line-height: 30px; text-align: center; }
.add-sheet { width: 24px; height: 24px; margin: 3px 0 0 39px; }
.dots { position: absolute; left: 934px; top: 9px; display: flex; flex-direction: column; gap: 3px; }
.dots i { width: 4px; height: 3px; background: #b3b0ad; }
.hscroll { position: absolute; left: 955px; top: 3px; width: 579px; height: 25px; display: flex; background: #d8d8d8; }
.hbtn { width: 25px; flex: none; background: #fff; border: 1px solid #808080; display: flex; align-items: center; justify-content: center; }
.hthumb { width: 496px; flex: none; background: #fff; border: 1px solid #808080; border-left: 0; }
.htrack { flex: 1; background: #d8d8d8; }

/* status */
.status { height: 33px; flex: none; background: #f3f2f1; border-top: 1px solid #d2d0ce; display: flex; align-items: center; font-size: 14.600px; color: #605e5c; position: relative; }
.st-ready { margin-left: 12px; width: 70px; }
.st-macro { width: 23px; height: 21px; }
.st-acc { width: 22px; height: 22px; margin-left: 24px; }
.st-acc-text { margin-left: 4px; white-space: nowrap; }
.views { position: absolute; left: 1101px; top: 0; height: 32px; display: flex; }
.view { width: 60px; height: 32px; display: flex; align-items: center; justify-content: center; }
.view-on { background: #d2d0ce; }
.view svg { width: 20px; height: 20px; }
.zoom-ctl { position: absolute; left: 1287px; top: 0; height: 32px; display: flex; align-items: center; }
.z-sym { font-size: 19px; width: 20px; text-align: center; color: #605e5c; }
.z-track { width: 148px; height: 2px; background: #555; margin: 0 3px; position: relative; }
.z-knob { position: absolute; left: 70px; top: -8px; width: 8px; height: 18px; background: #737373; }
.z-val { margin-left: 15px; }

/* overlay items */
.chart { position: absolute; left: 300px; top: 345px; width: 845px; height: 585px; font-family: "Noto Sans", sans-serif; }
.curve { fill: none; stroke: #ed7d31; stroke-width: 3.200; stroke-linecap: round; }
.curve-glow { fill: none; stroke: #ed7d31; stroke-width: 14; opacity: .42; filter: url(#glow); }
.pts circle { fill: #f7b48a; }
.c-title { fill: #d9d9d9; font-size: 23px; font-weight: 700; text-anchor: middle; }
.c-val text, .c-y text, .c-x text { fill: #bfbfbf; font-size: 15px; text-anchor: middle; }
.c-axis { fill: #bfbfbf; font-size: 15px; font-weight: 700; text-anchor: middle; }
.handles circle { fill: #fff; stroke: #666; stroke-width: 2.500; }
.page-break { position: absolute; left: 1001px; width: 1px; background: repeating-linear-gradient(#909090 0 5px, transparent 5px 8px); }
.pb-top { top: 336px; height: 14px; }
.pb-bottom { top: 926px; height: 24px; }
.floaters { position: absolute; left: 1149px; top: 352px; display: flex; flex-direction: column; gap: 15px; }
.fl { width: 42px; height: 42px; background: #fff; border: 1px solid #666; }
.fl svg { width: 40px; height: 40px; }

.menu { position: absolute; left: 15px; top: 214px; width: 206px; height: 487px; background: #fff; border: 1px solid #c8c6c4; padding-top: 1px; box-shadow: 0 2px 5px rgba(0,0,0,.2); font-size: 16.500px; color: #323130; }
.mi { height: 44px; display: flex; align-items: center; white-space: nowrap; }
.mi-t { margin-top: -2px; }
.mi-ic { width: 24px; height: 24px; margin: 0 13px 0 18px; flex: none; }
.chev { width: 9px; height: 16px; margin-left: auto; margin-right: 12px; margin-top: -4px; flex: none; }
.mi-on { background: #d2d0ce; }
.mi-dis { color: #b3b0ad; }

.submenu { position: absolute; left: 221px; top: 480px; width: 303px; height: 338px; background: #fff; border: 1px solid #d2d0ce; box-shadow: 0 2px 5px rgba(0,0,0,.2); font-size: 16.700px; color: #605e5c; }
.si { height: 72px; display: flex; align-items: center; white-space: nowrap; }
.si-box { width: 60px; height: 60px; margin: 0 15px; flex: none; }
.si-box svg { width: 58px; height: 58px; }
.si-boxed { background: #c4c4c4; border: 1px solid #8a8a8a; }
.si-on { background: #c4c4c4; color: #323130; }
.si-sep { height: 1px; background: #e1dfdd; margin-top: 1px; }
.si-more { height: 47px; line-height: 47px; text-align: center; color: #323130; padding-right: 1px; }
.cursor { position: absolute; left: 492px; top: 682px; width: 20px; height: 30px; }
```
